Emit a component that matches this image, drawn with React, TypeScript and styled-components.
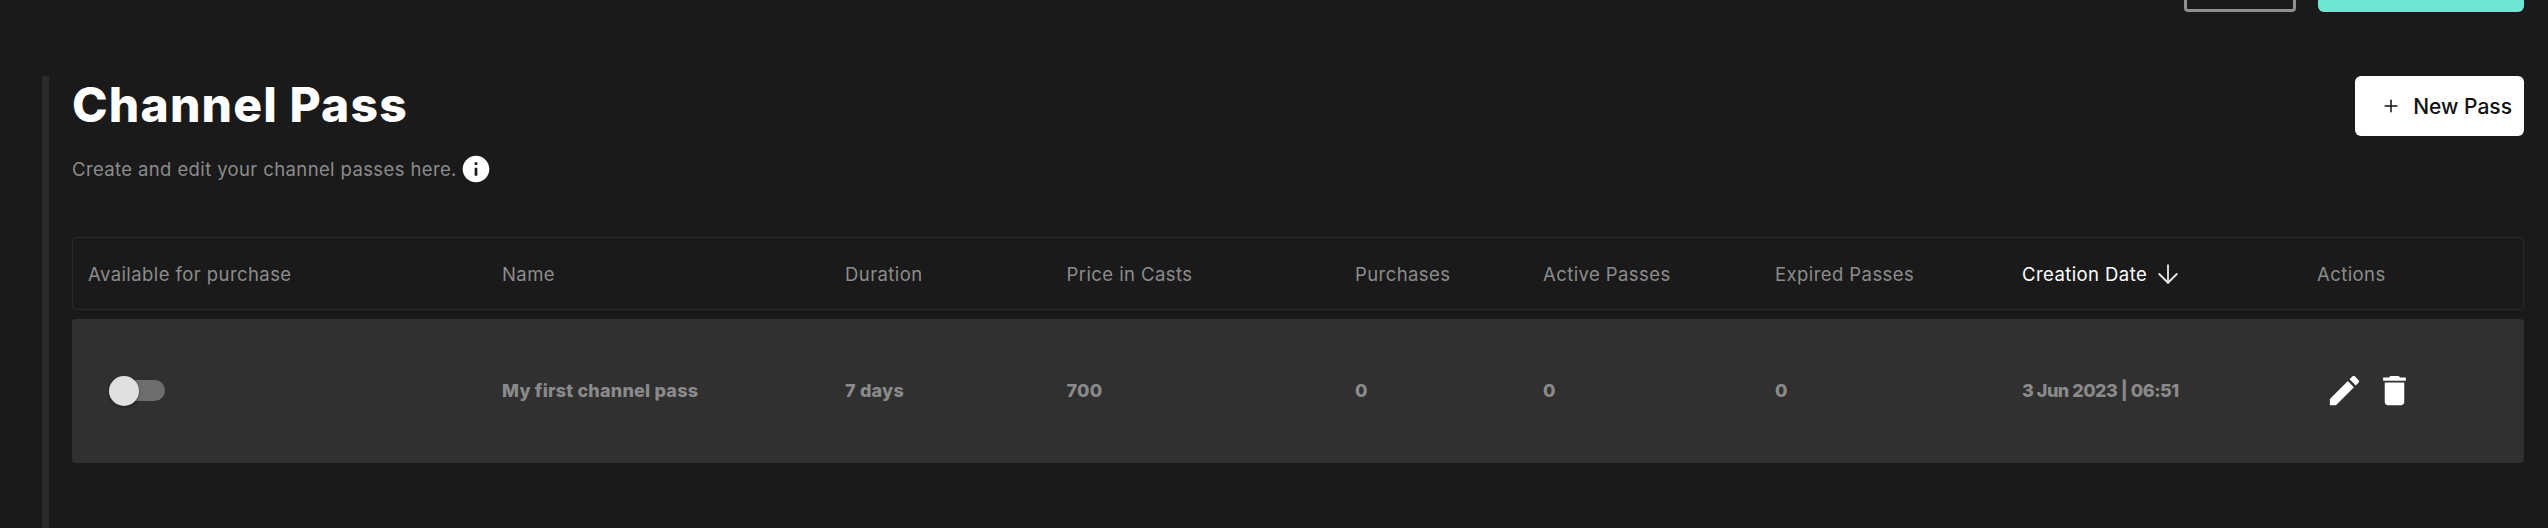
import React from "react";
import styled, { createGlobalStyle, css } from "styled-components";
import { ArrowDown, Plus } from "lucide-react";
import { MdDelete, MdEdit, MdInfo } from "react-icons/md";

const GlobalStyle = createGlobalStyle`
  html, body {
    margin: 0;
    height: 100%;
    background: #1a1a1a;
    overflow: hidden;
    font-family: "Inter", "Noto Sans", sans-serif;
  }
  * {
    box-sizing: border-box;
  }
`;

const columns = css`
  display: grid;
  grid-template-columns: 414px 343px 221.5px 288.5px 188px 232px 247px 295px 1fr;
  align-items: center;
  padding-left: 16px;
`;

const TopBar = styled.div`
  height: 12px;
  display: flex;
  justify-content: flex-end;
  align-items: flex-end;
  gap: 22px;
  padding-right: 24px;
  overflow: hidden;
`;

const OutlineButton = styled.button`
  width: 112px;
  height: 60px;
  flex: none;
  background: transparent;
  border: 3px solid #8f8f8f;
  border-radius: 4px;
`;

const PrimaryButton = styled.button`
  width: 206px;
  height: 60px;
  flex: none;
  background: #6ae6d2;
  border: 0;
  border-radius: 6px;
`;

const Section = styled.section`
  height: 452px;
  margin: 64px 24px 0 42px;
  padding-left: 23px;
  border-left: 7px solid #2b2b2b;
`;

const Head = styled.header`
  height: 161px;
  display: flex;
  justify-content: space-between;
  align-items: flex-start;
`;

const Title = styled.h1`
  margin: 0;
  height: 58px;
  color: #fff;
  font-size: 48px;
  line-height: 58px;
  font-weight: 800;
  letter-spacing: 1.15px;
`;

const Subtitle = styled.p`
  margin: 21px 0 0;
  height: 28px;
  display: flex;
  align-items: center;
  gap: 6px;
  color: #8c8c8c;
  font-size: 18.5px;
  letter-spacing: 0.38px;
`;

const InfoIcon = styled(MdInfo)`
  color: #fff;
  margin: 0 -3px 0 -3px;
`;

const NewPassButton = styled.button`
  width: 169px;
  height: 60px;
  display: flex;
  justify-content: flex-end;
  align-items: center;
  gap: 12px;
  padding: 0 12px 0 0;
  background: #fff;
  color: #111;
  border: 0;
  border-radius: 6px;
  font-family: inherit;
  font-size: 21px;
  font-weight: 500;
`;

const TableHead = styled.div`
  ${columns}
  height: 73px;
  margin-bottom: 9px;
  padding-left: 15px;
  border: 1px solid #2b2b2b;
  border-radius: 4px;
  font-size: 18.5px;
  letter-spacing: 0.42px;
`;

const HeadCell = styled.div<{ $active?: boolean }>`
  display: flex;
  align-items: center;
  gap: 10px;
  color: ${(p) => (p.$active ? "#fff" : "#8c8c8c")};
`;

const SortArrow = styled(ArrowDown)`
  color: #e4e4e4;
  margin: 0 -4.5px;
`;

const Row = styled.div`
  ${columns}
  height: 144px;
  padding-bottom: 1px;
  background: #303030;
  border-radius: 4px;
  color: #8a8a8a;
  font-size: 18px;
  font-weight: 800;
  letter-spacing: 0.2px;
`;

const DateCell = styled.div`
  letter-spacing: -0.5px;
`;

const Toggle = styled.div`
  position: relative;
  width: 56px;
  height: 21px;
  margin-left: 21px;
  background: #6e6e6e;
  border-radius: 11px;
`;

const Thumb = styled.span`
  position: absolute;
  top: -4px;
  left: 0;
  width: 30px;
  height: 30px;
  background: #e0e0e0;
  border-radius: 50%;
  box-shadow: 0 1px 3px rgba(0, 0, 0, 0.4);
`;

const Actions = styled.div`
  display: flex;
  gap: 11px;
  margin-left: 8px;
  color: #fff;
`;

const headers = [
  "Available for purchase",
  "Name",
  "Duration",
  "Price in Casts",
  "Purchases",
  "Active Passes",
  "Expired Passes",
];

const values = ["My first channel pass", "7 days", "700", "0", "0", "0"];

export default function App() {
  return (
    <>
      <GlobalStyle />
      <TopBar>
        <OutlineButton />
        <PrimaryButton />
      </TopBar>
      <Section>
        <Head>
          <div>
            <Title>Channel Pass</Title>
            <Subtitle>
              Create and edit your channel passes here.
              <InfoIcon size={32} />
            </Subtitle>
          </div>
          <NewPassButton>
            <Plus size={20} strokeWidth={1.8} />
            New Pass
          </NewPassButton>
        </Head>
        <TableHead>
          {headers.map((h) => (
            <HeadCell key={h}>{h}</HeadCell>
          ))}
          <HeadCell $active>
            Creation Date
            <SortArrow size={30} strokeWidth={1.5} />
          </HeadCell>
          <HeadCell>Actions</HeadCell>
        </TableHead>
        <Row>
          <Toggle>
            <Thumb />
          </Toggle>
          {values.map((v, i) => (
            <div key={i}>{v}</div>
          ))}
          <DateCell>3 Jun 2023 | 06:51</DateCell>
          <Actions>
            <MdEdit size={39} />
            <MdDelete size={39} />
          </Actions>
        </Row>
      </Section>
    </>
  );
}
